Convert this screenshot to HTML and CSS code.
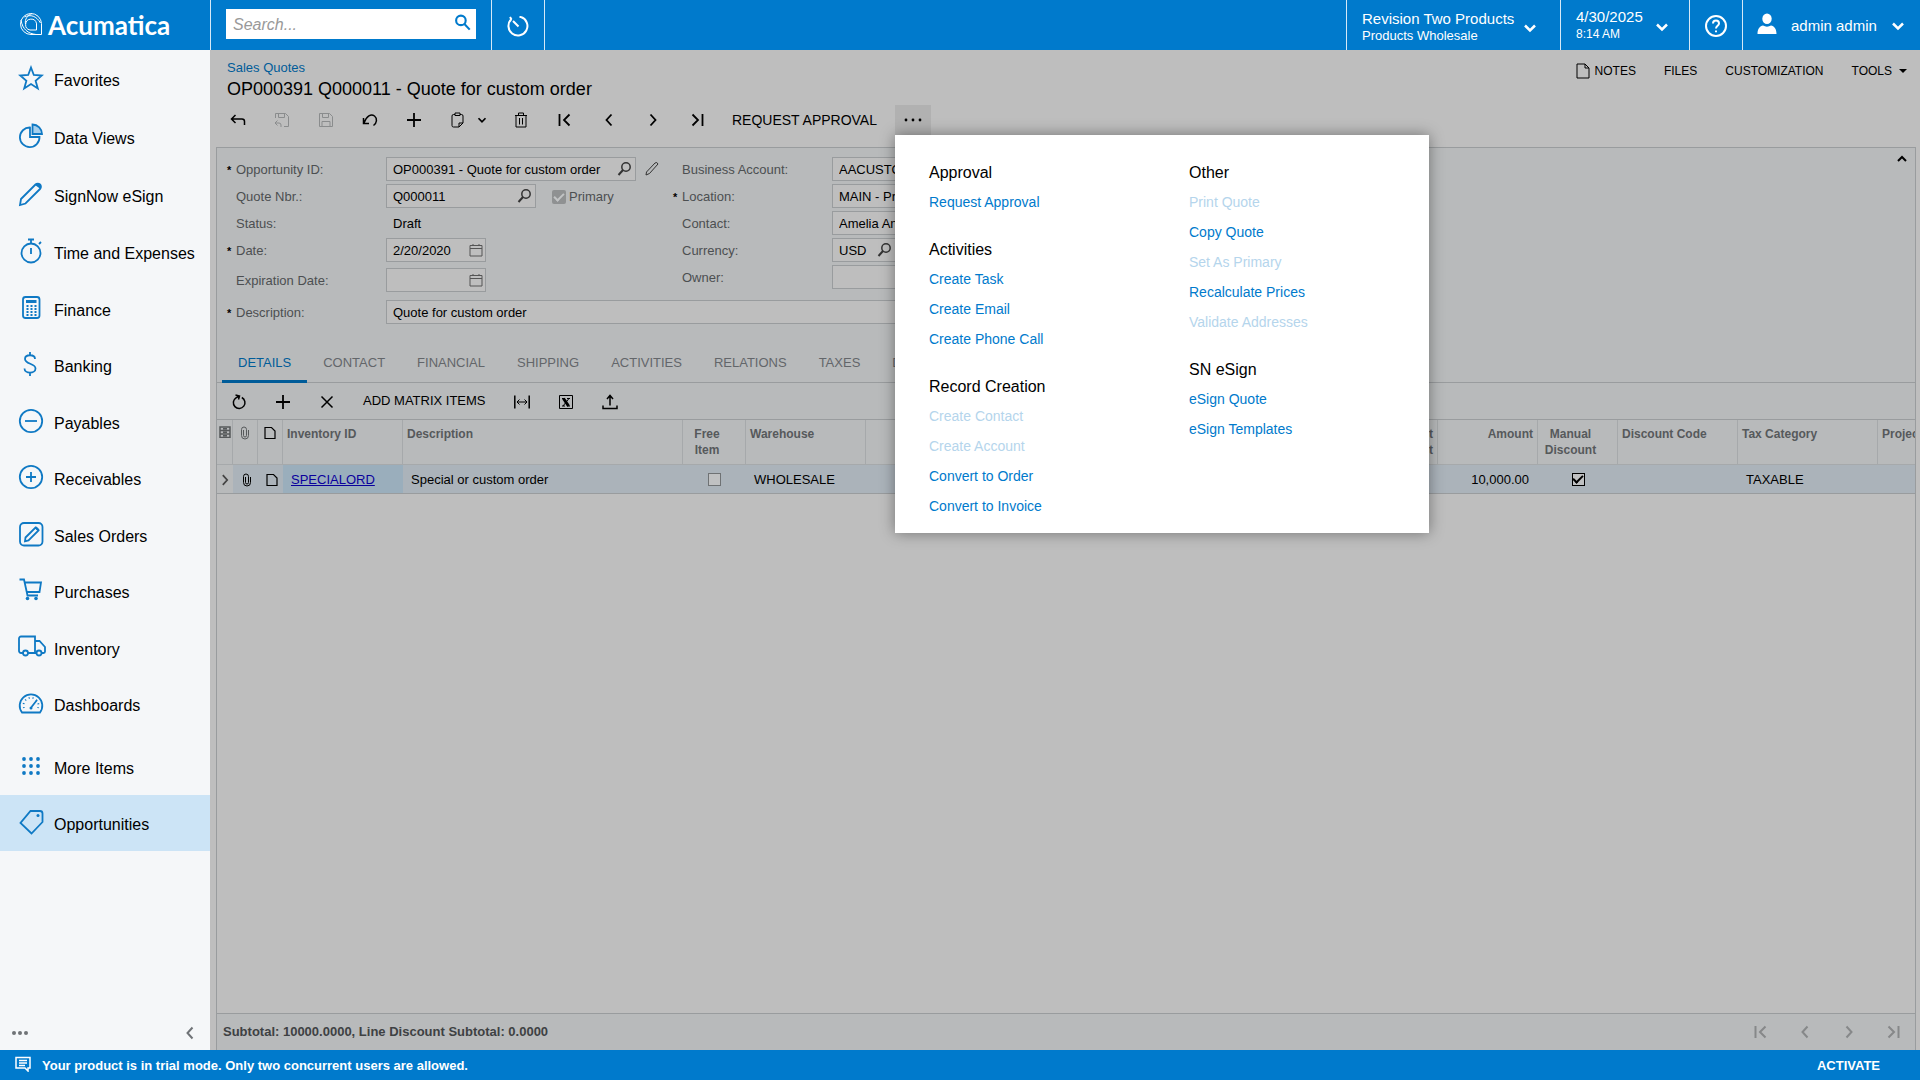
FILE: index.html
```html
<!DOCTYPE html>
<html lang="en">
<head>
<meta charset="utf-8">
<title>Acumatica - Sales Quotes</title>
<link rel="stylesheet" href="styles.css">
</head>
<body>
<svg class="defs" aria-hidden="true">
  <symbol id="i-chev-down" viewBox="0 0 24 24"><path d="M6 9l6 6 6-6"/></symbol>
  <symbol id="i-prev" viewBox="0 0 16 16"><path d="M10.500 2.500L5.500 8l5 5.500"/></symbol>
  <symbol id="i-next" viewBox="0 0 16 16"><path d="M5.500 2.500l5 5.500-5 5.500"/></symbol>
  <symbol id="i-first" viewBox="0 0 16 16"><path d="M2.500 2v12M12.500 2.500L7 8l5.500 5.500"/></symbol>
  <symbol id="i-last" viewBox="0 0 16 16"><path d="M13.500 2v12M3.500 2.500L9 8l-5.500 5.500"/></symbol>
  <symbol id="i-plus" viewBox="0 0 16 16"><path d="M8 1v14M1 8h14"/></symbol>
  <symbol id="i-search" viewBox="0 0 16 16"><circle cx="9" cy="6" r="4.200" stroke-width="1.500"/><path d="M6 9l-4.500 5"/></symbol>
  <symbol id="i-cal" viewBox="0 0 14 14"><path d="M1 2.500h12v10.500H1zM1 5.500h12M4 1v2M10 1v2"/></symbol>
  <symbol id="i-note" viewBox="0 0 12 14"><path d="M1 1.500h6.500L11 5v7.500H1z"/></symbol>
  <symbol id="i-clip" viewBox="0 0 10 14"><path d="M3.500 4v5.500a1.500 1.500 0 0 0 3 0V3.500a2.500 2.500 0 0 0-5 0v6a3.500 3.500 0 0 0 7 0V4"/></symbol>
</svg>

<header class="topbar">
  <a class="logo" href="#">
    <svg class="logo-mark" viewBox="0 0 24 24"><path d="M22.500 22.500V11.500A10.500 10.500 0 1 0 12 22.500zM17.500 18H11a5.500 5.500 0 1 1 6.500-6.500zM17.500 18v-6.500M2 8c1.500 9.500 7 13.500 15 14.500M5.500 5c6-3 12-1 16 6M6.500 12c-1-5 2-8.500 6.500-10.500"/></svg>
    <span>Acumatica</span>
  </a>
  <div class="search-zone">
    <form class="search"><input type="text" placeholder="Search..." aria-label="Search"><button type="button" aria-label="Search"><svg viewBox="0 0 16 16"><circle cx="6.500" cy="6" r="4.500"/><path d="M9.800 9.500l5 5.200"/></svg></button></form>
  </div>
  <button class="top-btn recent" aria-label="Recent"><svg viewBox="0 0 24 24"><path d="M5.500 5A9.500 9.500 0 1 0 15 3M12.500 12.500L7 7M5.500 5.500L4 3M15 3h-1.500"/></svg></button>
  <div class="top-fill"></div>
  <button class="top-btn company"><span class="two"><span>Revision Two Products</span><small>Products Wholesale</small></span><svg class="chev"><use href="#i-chev-down"/></svg></button>
  <button class="top-btn date"><span class="two"><span>4/30/2025</span><small class="time">8:14 AM</small></span><svg class="chev"><use href="#i-chev-down"/></svg></button>
  <button class="top-btn help" aria-label="Help"><svg viewBox="0 0 24 24"><circle cx="12" cy="12" r="10"/><path d="M9 9.500c0-4 6-4 6 0 0 2.300-3 2.400-3 5M12 16.500v1.800"/></svg></button>
  <button class="top-btn user"><svg class="person" viewBox="0 0 20 22"><ellipse cx="10" cy="5.800" rx="4.700" ry="5.300"/><path d="M.5 21c0-5.500 2.500-8 5.500-8.500 2.500 1.500 5.500 1.500 8 0 3 .5 5.500 3 5.500 8.500z"/></svg><span>admin admin</span><svg class="chev"><use href="#i-chev-down"/></svg></button>
</header>

<div class="body">
  <aside class="sidebar">
    <nav class="nav">
      <a href="#"><svg viewBox="0 0 26 26"><path d="M13 2.500l2.800 7.500 8 .500-6.200 5.200 2.200 7.800-6.800-4.500L6.200 23.500l2.200-7.800L2.200 10.500l8-.500z"/></svg>Favorites</a>
      <a href="#"><svg viewBox="0 0 26 26"><path d="M12 4.500A9.800 9.800 0 1 0 21.500 14H12z"/><path class="tint" d="M14.500 1.500v9.500h9.500A9.500 9.500 0 0 0 14.500 1.500z"/></svg>Data Views</a>
      <a href="#"><svg viewBox="0 0 26 26"><path d="M3 18L17.500 3.500a2.500 2.500 0 0 1 4.500 4.500L7.500 22.500 2 24z"/><path class="solid" d="M17 4c2-3 8 0 5.500 4z"/></svg>SignNow eSign</a>
      <a href="#"><svg viewBox="0 0 26 26"><circle cx="13" cy="15" r="9.500"/><path d="M10 1.500h6M13 1.500V5M13 10v6M21 6l2-2"/></svg>Time and Expenses</a>
      <a href="#"><svg viewBox="0 0 26 26"><rect x="5" y="2" width="16.500" height="21" rx="2.500"/><path class="thick" d="M8 6.500h10.500"/><path class="dots" d="M8.500 11h11M8.500 14h11M8.500 17h11M8.500 20h11"/></svg>Finance</a>
      <a href="#"><svg viewBox="0 0 26 26"><path d="M17 8c0-5-10-5-10 0 0 5.500 10.500 4 10.500 9.500 0 5.500-11 5.500-11 0M12 1v3M12 21.500V25"/></svg>Banking</a>
      <a href="#"><svg viewBox="0 0 26 26"><circle cx="13" cy="13" r="11.200"/><path d="M7 13h12"/></svg>Payables</a>
      <a href="#"><svg viewBox="0 0 26 26"><circle cx="13" cy="13" r="11.200"/><path d="M8 13h10M13 8v10"/></svg>Receivables</a>
      <a href="#"><svg viewBox="0 0 26 26"><rect x="2" y="2" width="22.500" height="22.500" rx="4"/><path d="M7.500 16.500L17.500 6.500l3 3-10 10-3.500.800z"/><path class="solid" d="M17 7l1.500-1.500 3 3L20 10z"/></svg>Sales Orders</a>
      <a href="#"><svg viewBox="0 0 26 26"><path d="M1.500 2.500H6L9.500 18.500H20M7 5.500h16l-1.500 9.500H9"/><circle class="solid" cx="9.500" cy="21.500" r="1.800"/><circle class="solid" cx="18" cy="21.500" r="1.800"/></svg>Purchases</a>
      <a href="#"><svg class="wide" viewBox="0 0 28 26"><path d="M5 19H3a2 2 0 0 1-2-2V4.500a2 2 0 0 1 2-2H17V19H10M17 7h4.500L27 13v4.500a1.500 1.500 0 0 1-1.500 1.500H23.500M17 19h1.500"/><circle cx="7.500" cy="19" r="2.500"/><circle cx="21" cy="19" r="2.500"/></svg>Inventory</a>
      <a href="#"><svg viewBox="0 0 26 26"><path d="M4 22.500a11.300 11.300 0 1 1 18 0zM13.500 17l5.500-7"/><circle class="solid" cx="13" cy="18" r="1.500"/><path class="ticks" d="M6 18a7.500 7.500 0 1 1 14 0"/></svg>Dashboards</a>
      <a class="spaced" href="#"><svg class="solid-all" viewBox="0 0 26 26"><circle cx="6" cy="6" r="1.900"/><circle cx="13" cy="6" r="1.900"/><circle cx="20" cy="6" r="1.900"/><circle cx="6" cy="13" r="1.900"/><circle cx="13" cy="13" r="1.900"/><circle cx="20" cy="13" r="1.900"/><circle cx="6" cy="20" r="1.900"/><circle cx="13" cy="20" r="1.900"/><circle cx="20" cy="20" r="1.900"/></svg>More Items</a>
      <a class="current" href="#"><svg viewBox="0 0 26 26"><path d="M12.500 2h9.500a2.500 2.500 0 0 1 2.500 2.500V13L13.500 24.500 2.500 14z"/><circle class="solid" cx="20" cy="6.500" r="1.500"/></svg>Opportunities</a>
    </nav>
    <div class="side-foot">
      <button aria-label="More"><svg viewBox="0 0 16 16"><circle cx="2" cy="8" r="2"/><circle cx="8" cy="8" r="2"/><circle cx="14" cy="8" r="2"/></svg></button>
      <button class="collapse" aria-label="Collapse"><svg><use href="#i-prev"/></svg></button>
    </div>
  </aside>

  <main class="main">
    <div class="titles">
      <div>
        <a class="crumb" href="#">Sales Quotes</a>
        <h1>OP000391 Q000011 - Quote for custom order</h1>
      </div>
      <div class="page-links">
        <button><svg viewBox="0 0 14 16"><path d="M1 1h8l4 4v10H1zM9 1v4h4"/></svg>NOTES</button>
        <button>FILES</button>
        <button>CUSTOMIZATION</button>
        <button>TOOLS<i class="caret"></i></button>
      </div>
    </div>

    <div class="toolbar main-tools">
      <button aria-label="Back"><svg viewBox="0 0 16 16"><path class="mid" d="M5.500 3L1.500 7l4 4M1.500 7h10.500q2.500 0 2.500 2.500V13"/></svg></button>
      <button disabled aria-label="Save and close"><svg viewBox="0 0 16 16"><path d="M1.500 6V1.500h10L14.500 4.500v10H10M4.500 1.500v4h6v-4M3.500 8.500L1 11l2.500 2.500M1 11h4q2 0 2 2v2"/></svg></button>
      <button disabled aria-label="Save"><svg viewBox="0 0 16 16"><path d="M1.500 1.500h10l3 3v10h-13zM4.500 1.500v4h6v-4M4 14.500V9.500h8v5"/></svg></button>
      <button aria-label="Undo"><svg viewBox="0 0 16 16"><path class="mid" d="M1.500 6v5.500h5.500M2 11C4.500 4 9 1.500 12.500 4c3 2.500 2.500 7-1 9.500"/></svg></button>
      <button aria-label="Add"><svg class="bold"><use href="#i-plus"/></svg></button>
      <button class="combo" aria-label="Clipboard"><svg viewBox="0 0 16 16"><path d="M5 2.500H3.500q-1.500 0-1.500 1.500v9.500q0 1.500 1.500 1.500H9l4-4V4q0-1.500-1.500-1.500H10M5 1h5v2.500H5zM9 15v-4h4"/></svg><svg class="small"><use href="#i-chev-down"/></svg></button>
      <button aria-label="Delete"><svg viewBox="0 0 16 16"><path d="M2 3.500h12M5.500 3.500V1h5v2.500M3 3.500V15h10V3.500M6.500 6v6.500M9.500 6v6.500"/></svg></button>
      <button aria-label="First"><svg class="bold"><use href="#i-first"/></svg></button>
      <button aria-label="Previous"><svg class="bold"><use href="#i-prev"/></svg></button>
      <button aria-label="Next"><svg class="bold"><use href="#i-next"/></svg></button>
      <button aria-label="Last"><svg class="bold"><use href="#i-last"/></svg></button>
      <button class="text">REQUEST APPROVAL</button>
      <div class="more">
        <button class="more-btn" aria-label="More actions"><svg class="solid-all" viewBox="0 0 18 16"><circle cx="2" cy="8" r="1.400"/><circle cx="9" cy="8" r="1.400"/><circle cx="16" cy="8" r="1.400"/></svg></button>
        <div class="menu">
          <div class="menu-col">
            <section><h2>Approval</h2><button>Request Approval</button></section>
            <section><h2>Activities</h2><button>Create Task</button><button>Create Email</button><button>Create Phone Call</button></section>
            <section><h2>Record Creation</h2><button disabled>Create Contact</button><button disabled>Create Account</button><button>Convert to Order</button><button>Convert to Invoice</button></section>
          </div>
          <div class="menu-col">
            <section><h2>Other</h2><button disabled>Print Quote</button><button>Copy Quote</button><button disabled>Set As Primary</button><button>Recalculate Prices</button><button disabled>Validate Addresses</button></section>
            <section><h2>SN eSign</h2><button>eSign Quote</button><button>eSign Templates</button></section>
          </div>
        </div>
      </div>
    </div>

    <div class="panel">
      <form class="form">
        <div class="cols">
          <div class="col">
            <div class="row req"><label for="opp">Opportunity ID:</label><span class="field w-l"><input id="opp" type="text" value="OP000391 - Quote for custom order"><svg><use href="#i-search"/></svg></span><svg class="pencil" viewBox="0 0 16 16"><path d="M2.500 11L11 2q2-1.500 3 1L5.500 12.500 2 14z"/></svg></div>
            <div class="row"><label for="nbr">Quote Nbr.:</label><span class="field w-m"><input id="nbr" type="text" value="Q000011"><svg><use href="#i-search"/></svg></span><label class="primary"><input class="check filled" type="checkbox" checked disabled>Primary</label></div>
            <div class="row"><label for="status">Status:</label><output id="status">Draft</output></div>
            <div class="row req"><label for="date">Date:</label><span class="field w-s"><input id="date" type="text" value="2/20/2020"><svg class="cal"><use href="#i-cal"/></svg></span></div>
            <div class="row gap"><label for="exp">Expiration Date:</label><span class="field w-s"><input id="exp" type="text"><svg class="cal"><use href="#i-cal"/></svg></span></div>
          </div>
          <div class="col">
            <div class="row"><label for="acct">Business Account:</label><span class="field w-l"><input id="acct" type="text" value="AACUSTOMER"></span></div>
            <div class="row req"><label for="loc">Location:</label><span class="field w-l"><input id="loc" type="text" value="MAIN - Primary"></span></div>
            <div class="row"><label for="contact">Contact:</label><span class="field w-l"><input id="contact" type="text" value="Amelia Andrews"></span></div>
            <div class="row"><label for="cur">Currency:</label><span class="field w-xs"><input id="cur" type="text" value="USD"><svg><use href="#i-search"/></svg></span></div>
            <div class="row"><label for="owner">Owner:</label><span class="field w-l"><input id="owner" type="text"></span></div>
          </div>
          <button class="fold" type="button" aria-label="Collapse form"><svg><use href="#i-chev-down"/></svg></button>
        </div>
        <div class="row req desc"><label for="desc">Description:</label><span class="field w-xl"><input id="desc" type="text" value="Quote for custom order"></span></div>
      </form>

      <div class="tabs" role="tablist">
        <button class="active" role="tab">DETAILS</button><button role="tab">CONTACT</button><button role="tab">FINANCIAL</button><button role="tab">SHIPPING</button><button role="tab">ACTIVITIES</button><button role="tab">RELATIONS</button><button role="tab">TAXES</button><button role="tab">DISCOUNTS</button>
      </div>

      <div class="toolbar grid-tools">
        <button aria-label="Refresh"><svg viewBox="0 0 16 16"><path class="mid" d="M10.800 3.500A5.800 5.800 0 1 1 5 3.800L8 2M4.500 1L8.500 2 7.500 5.500"/></svg></button>
        <button aria-label="Add row"><svg class="bold"><use href="#i-plus"/></svg></button>
        <button aria-label="Delete row"><svg class="mid" viewBox="0 0 16 16"><path d="M2.500 2.500l11 11M13.500 2.500l-11 11"/></svg></button>
        <button class="text">ADD MATRIX ITEMS</button>
        <button aria-label="Fit columns"><svg viewBox="0 0 16 16"><path class="mid" d="M.8 1.500v13M15.200 1.500v13"/><path d="M3 8h10M5.500 5.500L3 8l2.500 2.500M10.500 5.500L13 8l-2.500 2.500"/></svg></button>
        <button aria-label="Export to Excel"><svg viewBox="0 0 16 16"><path d="M1.500 1.500h13v13h-13zM4 4.500h3M4 12h3M9 4.500h3M9 12h3M11 4.500L5 12"/><path class="heavy" d="M5.500 4.500l5 7.500"/></svg></button>
        <button aria-label="Upload"><svg class="mid" viewBox="0 0 16 16"><path d="M8 11.500V2M5 5l3-3.500L11 5M1 11.500v3h14v-3"/></svg></button>
      </div>

      <div class="grid-area">
        <table class="grid">
          <colgroup><col class="c16"><col class="c25"><col class="c25"><col class="c120"><col class="c280"><col class="c63"><col class="c120"><col><col class="c100"><col class="c80"><col class="c120"><col class="c140"><col class="c37"></colgroup>
          <thead><tr>
            <th class="ic"><svg class="box" viewBox="0 0 12 12"><path d="M1 1h10v10.500H1zM1 4.500h10M1 8h10M4 2.800h4M4 6.300h4M4 9.800h4"/></svg></th>
            <th class="ic"><svg class="pin"><use href="#i-clip"/></svg></th>
            <th class="ic dark"><svg class="page"><use href="#i-note"/></svg></th>
            <th>Inventory ID</th><th>Description</th><th class="mid-col">Free<br>Item</th><th>Warehouse</th><th class="num">Discount<br>Amount</th><th class="num">Amount</th><th class="mid-col">Manual<br>Discount</th><th>Discount Code</th><th>Tax Category</th><th class="cut">Project</th>
          </tr></thead>
          <tbody><tr>
            <td class="ic plain"><svg class="arrow"><use href="#i-next"/></svg></td>
            <td class="ic shift"><svg class="pin"><use href="#i-clip"/></svg></td>
            <td class="ic shift"><svg class="page"><use href="#i-note"/></svg></td>
            <td class="sel"><a href="#">SPECIALORD</a></td><td>Special or custom order</td><td class="tick"><input class="check" type="checkbox" aria-label="Free item"></td><td>WHOLESALE</td><td></td><td class="num">10,000.00</td><td class="tick"><input class="check dark" type="checkbox" checked aria-label="Manual discount"></td><td></td><td>TAXABLE</td><td></td>
          </tr></tbody>
        </table>
      </div>

      <div class="totals">
        <span>Subtotal: 10000.0000, Line Discount Subtotal: 0.0000</span>
        <div class="pager">
          <button disabled aria-label="First page"><svg><use href="#i-first"/></svg></button><button disabled aria-label="Previous page"><svg><use href="#i-prev"/></svg></button><button disabled aria-label="Next page"><svg><use href="#i-next"/></svg></button><button disabled aria-label="Last page"><svg><use href="#i-last"/></svg></button>
        </div>
      </div>
    </div>
  </main>
</div>

<footer class="trial">
  <svg viewBox="0 0 16 16"><path class="mid" d="M1 1.500h14v10.500h-2v3l-3-3H1z"/><path class="mid" d="M4 4.500h8M4 7h8M4 9.500h6"/></svg>
  <span>Your product is in trial mode. Only two concurrent users are allowed.</span>
  <button>ACTIVATE</button>
</footer>
</body>
</html>
```
FILE: styles.css
```css
:root {
  --blue: #007acc;
  --page: #bebebe;
  --panel: #b8babb;
  --line: #999c9e;
  --muted: #4c4f51;
}
* { box-sizing: border-box; }
body {
  margin: 0;
  height: 100vh;
  display: flex;
  flex-direction: column;
  overflow: hidden;
  font: 13px/16px "Liberation Sans", Arial, sans-serif;
  color: #000;
  background: var(--page);
}
button { font: inherit; color: inherit; background: none; border: 0; padding: 0; margin: 0; }
input { font: inherit; color: inherit; }
a { text-decoration: none; color: inherit; }
h1, h2 { margin: 0; font-weight: 400; }
svg { display: block; flex: none; fill: none; stroke: currentColor; stroke-width: 1; }
.defs { position: absolute; width: 0; height: 0; }
.mid { stroke-width: 1.5; }
.bold { stroke-width: 1.8; }
.heavy { stroke-width: 3; }
.solid, .solid-all { fill: currentColor; }
.solid-all { stroke: none; }

/* top bar */
.topbar { flex: none; height: 50px; display: flex; background: var(--blue); color: #fff; }
.logo { width: 210px; display: flex; align-items: center; gap: 5px; padding: 0 0 1px 19px; font: 700 26px/32px Lato, sans-serif; }
.logo-mark { width: 24px; height: 24px; margin-bottom: 2px; }
.search-zone { width: 282px; padding: 9px 15px; border-left: 1px solid #d5e9f7; border-right: 1px solid #d5e9f7; }
.search { height: 30px; display: flex; align-items: center; background: #fff; padding: 0 5px 0 7px; }
.search input { flex: 1; min-width: 0; border: 0; padding: 1px 0 0; background: none; font-size: 16px; font-style: italic; outline: 0; color: #000; }
.search input::placeholder { color: #999; }
.search button { color: var(--blue); }
.search svg { width: 17px; height: 17px; stroke-width: 2; margin-bottom: 3px; }
.top-btn { display: flex; align-items: center; text-align: left; font-size: 15px; border-left: 1px solid #d5e9f7; }
.recent { width: 53px; justify-content: center; border-left: 0; border-right: 1px solid #d5e9f7; }
.recent svg { width: 24px; height: 24px; stroke-width: 2; margin-top: 2px; }
.top-fill { flex: 1; }
.two { flex: 1; display: flex; flex-direction: column; line-height: 17px; }
.two small { font-size: 13px; }
.two .time { font-size: 12px; line-height: 19px; }
.chev { width: 20px; height: 20px; stroke-width: 3; margin-top: 3px; }
.company { width: 214px; padding: 3px 20px 0 15px; }
.date { width: 129px; padding: 1px 17px 0 15px; }
.help { width: 53px; justify-content: center; }
.help svg { width: 24px; height: 24px; stroke-width: 2; margin-top: 2px; }
.user { width: 178px; padding: 0 12px 0 14px; }
.user .person { width: 20px; height: 22px; fill: #fff; stroke: none; margin-bottom: 3px; }
.user span { flex: 1; padding: 1px 0 0 14px; }
.user .chev { margin-top: 1px; }

.body { flex: 1; min-height: 0; display: flex; }

/* sidebar */
.sidebar { width: 210px; flex: none; display: flex; flex-direction: column; background: #f5f7f9; font-size: 16px; }
.nav { flex: 1; display: grid; grid-template-rows: repeat(3, 58px) repeat(4, 57px 56px) 57px 62px 56px; align-content: start; }
.nav a { display: flex; align-items: center; gap: 10px; padding: 3px 0 0 18px; }
.nav .spaced { padding-top: 9px; }
.nav .current { background: #cce4f6; }
.nav svg { width: 26px; height: 26px; margin-bottom: 6px; color: #0f79c4; stroke-width: 1.8; }
.nav svg.wide { width: 28px; margin-right: -2px; }
.nav .solid { stroke: none; }
.nav .solid-all { stroke: none; }
.nav .tint { fill: #a6cfec; }
.nav .thick { stroke-width: 3; }
.nav .dots { stroke-dasharray: 2 2; stroke-width: 2; }
.nav .ticks { stroke-dasharray: 1 3; }
.side-foot { display: flex; justify-content: space-between; align-items: center; height: 34px; padding: 0 12px; color: #6f7377; }
.side-foot svg { width: 16px; height: 16px; fill: currentColor; stroke: none; }
.side-foot .collapse svg { fill: none; stroke: currentColor; stroke-width: 2; }

/* page head */
.main { flex: 1; min-width: 0; display: flex; flex-direction: column; padding: 0 4px 0 6px; }
.titles { display: flex; justify-content: space-between; padding: 9px 0 0 11px; }
.crumb { display: block; line-height: 18px; color: #005c99; }
h1 { font-size: 18px; line-height: 24px; }
.page-links { display: flex; gap: 28px; height: 24px; padding-right: 9px; font-size: 12px; }
.page-links button { display: flex; align-items: center; }
.page-links svg { width: 14px; height: 16px; margin-right: 5px; }
.caret { border: 4px solid transparent; border-top-color: #000; border-bottom: 0; margin-left: 7px; }

.toolbar { display: flex; align-items: center; }
.toolbar > button { width: 44px; height: 30px; display: flex; align-items: center; justify-content: center; }
.toolbar svg { width: 16px; height: 16px; }
.toolbar > button.text { width: auto; padding: 0 14px; }
.toolbar button:disabled { color: #8a8c8d; }
.main-tools { height: 30px; margin: 4px 0 12px; font-size: 14px; }
.toolbar > button.combo { width: 63px; gap: 9px; padding-left: 3px; }
.toolbar svg.small { width: 14px; height: 14px; stroke-width: 3; }
.main-tools > button.text { padding: 0 18px 0 13px; }
.more { position: relative; }
.more-btn { display: flex; align-items: center; justify-content: center; width: 36px; height: 30px; background: #b1b1b1; }
.toolbar .more-btn svg { width: 18px; }

/* actions menu */
.menu { position: absolute; z-index: 5; top: 30px; left: 0; display: flex; width: 534px; padding: 26px 0 12px 34px; background: #fff; box-shadow: 0 0 14px rgba(0, 0, 0, .4); }
.menu-col { flex: none; width: 260px; }
.menu-col:last-child { width: 240px; }
.menu section + section { margin-top: 21px; }
.menu h2 { font-size: 16px; line-height: 24px; margin-bottom: 2px; }
.menu button { display: block; line-height: 30px; color: var(--blue); }
.menu button:disabled { color: #b5d5ec; }

/* record panel */
.panel { flex: 1; min-height: 0; display: flex; flex-direction: column; border: 1px solid var(--line); border-bottom: 0; background: var(--panel); }
.form { padding: 9px 0 20px 9px; }
.cols { display: flex; }
.col { width: 446px; display: flex; flex-direction: column; gap: 3px; }
.row { display: flex; align-items: center; height: 24px; }
.row.gap { margin-top: 3px; }
.row.desc { margin-top: 8px; }
.row > label:first-child { width: 160px; padding: 2px 0 0 10px; color: var(--muted); }
.row.req > label:first-child { padding-left: 1px; }
.req > label:first-child::before { content: "*"; display: inline-block; width: 9px; color: #000; font-size: 11px; font-weight: 700; }
.row output { padding: 2px 0 0 7px; }
.field { display: flex; align-items: center; height: 24px; padding: 0 2px 0 6px; border: 1px solid var(--line); background: var(--page); }
.field input { flex: 1; min-width: 0; width: 0; border: 0; padding: 1px 0 0; background: none; outline: 0; }
.field svg { width: 16px; height: 16px; stroke-width: 2; color: #333; }
.field svg.cal { width: 14px; height: 14px; stroke-width: 1; color: #555; }
.w-xs { width: 64px; }
.w-s { width: 100px; }
.w-m { width: 150px; }
.w-l { width: 250px; }
.w-xl { width: 696px; }
.pencil { width: 16px; height: 16px; margin-left: 8px; color: #333; }
.row .primary { display: flex; align-items: center; gap: 3px; margin-left: 16px; padding-top: 1px; color: var(--muted); }
.check { appearance: none; width: 13px; height: 13px; margin: 0; border: 1px solid #6f7274; background: #c0c1c2; }
.check:checked { display: grid; place-items: center; }
.check:checked::after { content: ""; width: 8px; height: 4px; border: solid #000; border-width: 0 0 2px 2px; rotate: -45deg; translate: 0 -1px; }
.check.dark { border-color: #000; }
.check.filled { width: 14px; height: 14px; border: 0; border-radius: 2px; background: #8f9192; }
.check.filled::after { border-color: #c2c4c5; }
.fold { margin: -6px 5px 0 auto; height: 16px; }
.fold svg { width: 16px; height: 16px; stroke-width: 3; rotate: 180deg; }

.tabs { display: flex; height: 39px; padding-left: 5px; border-bottom: 1px solid var(--line); color: #63666a; }
.tabs button { height: 39px; padding: 2px 16px 0; border-bottom: 3px solid transparent; }
.tabs .active { color: #005c99; border-color: #005c99; }

.grid-tools { height: 37px; border-bottom: 1px solid var(--line); }
.grid-tools svg { margin-top: 1px; }

.grid-area { flex: 1; min-height: 0; background: var(--page); }
.grid { width: 100%; table-layout: fixed; border-collapse: separate; border-spacing: 0; }
.grid th { height: 45px; padding: 6px 4px 0; vertical-align: top; text-align: left; font-size: 12px; color: #56595b; background: var(--panel); border-right: 1px solid #a6a9ab; border-bottom: 1px solid #a6a9ab; white-space: nowrap; overflow: hidden; }
.grid th:last-child { border-right: 0; }
.grid td { height: 29px; padding: 1px 9px 0 8px; background: #abb3ba; border-bottom: 1px solid var(--line); white-space: nowrap; }
.grid th.num, .grid td.num { text-align: right; }
.grid th.mid-col { text-align: center; padding-right: 18px; }
.grid .cut { padding-right: 0; text-overflow: clip; }
.grid .ic { padding-left: 0; padding-right: 0; }
.grid .ic.shift { padding-left: 2px; }
.grid .ic svg { margin: 0 auto; }
.grid th.dark { color: #000; }
.grid td.plain { background: var(--panel); color: #444; }
.grid td.sel { background: #9aaebc; }
.grid td.sel a { color: #0a009c; text-decoration: underline; }
.grid td.tick { padding: 0; }
.grid .tick .check { display: grid; margin: 0 auto; }
.box { width: 12px; height: 12px; stroke-width: 1.5; }
.pin { width: 10px; height: 14px; }
.page { width: 12px; height: 14px; stroke-width: 1.2; }
.arrow { width: 14px; height: 14px; stroke-width: 2; }
.c16 { width: 16px; } .c25 { width: 25px; } .c37 { width: 37px; } .c63 { width: 63px; } .c80 { width: 80px; }
.c100 { width: 100px; } .c120 { width: 120px; } .c140 { width: 140px; } .c280 { width: 280px; }

.totals { flex: none; display: flex; justify-content: space-between; align-items: center; height: 37px; padding-left: 6px; border-top: 1px solid var(--line); font-weight: 700; color: #3e4143; }
.pager { display: flex; color: #868889; }
.pager button { width: 44px; display: flex; justify-content: center; }
.pager svg { width: 16px; height: 16px; stroke-width: 2; }

.trial { flex: none; height: 30px; display: flex; align-items: center; padding: 2px 40px 0 15px; background: var(--blue); color: #fff; font-weight: 700; }
.trial svg { width: 16px; height: 16px; margin: 0 11px 4px 0; }
.trial span { flex: 1; }
```
